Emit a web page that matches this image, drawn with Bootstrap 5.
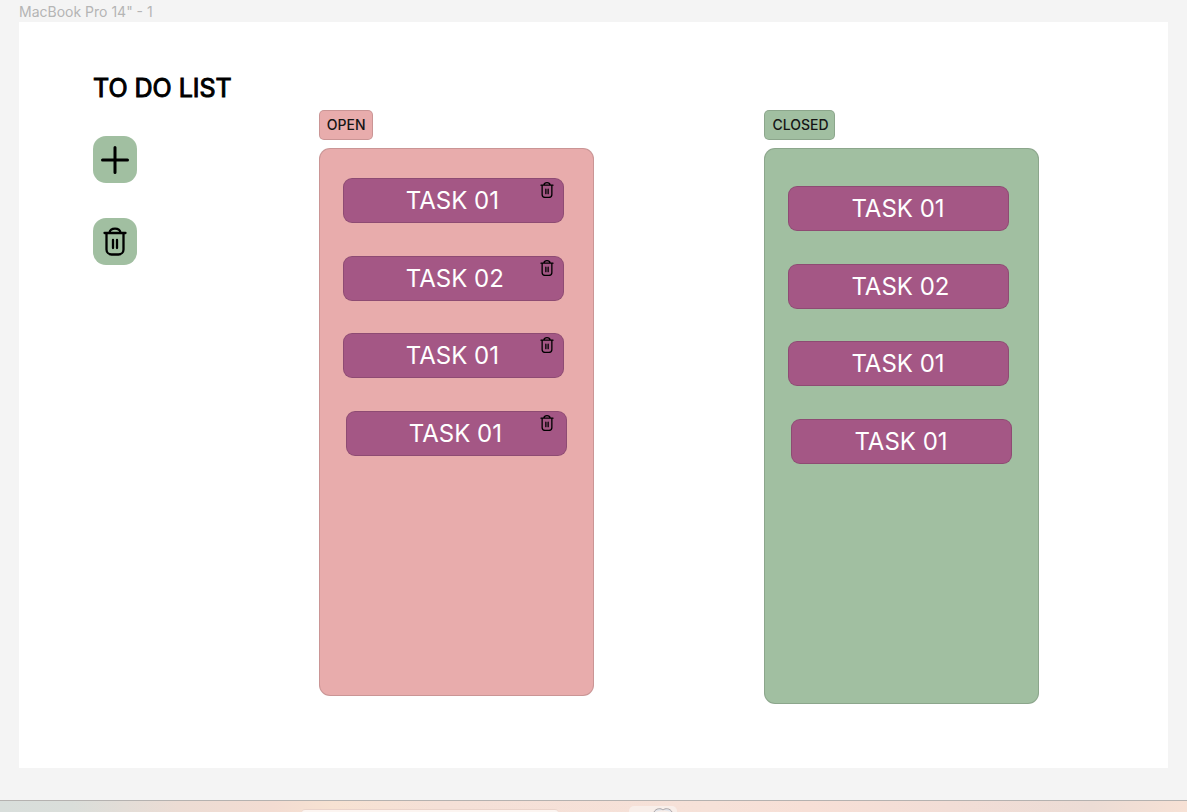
<!DOCTYPE html>
<html lang="en">
<head>
<meta charset="utf-8">
<meta name="viewport" content="width=device-width, initial-scale=1">
<title>To do list</title>
<link href="https://cdn.jsdelivr.net/npm/bootstrap@5.3.0/dist/css/bootstrap.min.css" rel="stylesheet">
<style>
  :root { --pink: #e8acac; --green: #a1bfa1; --plum: #a45785; --edge: rgba(0, 0, 0, .13); }
  body { font-family: Inter, "Liberation Sans", sans-serif; background: #f4f4f4; color: #000; }
  .frame-name { font-size: 14px; line-height: 24px; height: 22px; padding-left: 19px; color: #b5b5b5; }
  .artboard { margin: 0 19px 32px; padding: 0 0 64px 74px; background: #fff; }
  .board-grid { display: grid; grid-template-columns: 226fr 275fr 171fr 275fr 129fr; align-items: start; }
  .lane-open { grid-column: 2; }
  .lane-closed { grid-column: 4; }
  .side { padding-top: 48px; }
  .side h1 { font-size: 25px; line-height: 36px; font-weight: 400; -webkit-text-stroke: 1px #000; white-space: nowrap; margin-bottom: 30px; }
  .tool { width: 44px; height: 47px; border: 0; border-radius: 13px; background: var(--green); color: #000; }
  .tools { gap: 35px; }
  .lane { padding-top: 88px; }
  .tag { font-size: 14px; line-height: 28px; font-weight: 500; color: #151515; padding: 0 6px 0 7px; border: 1px solid var(--edge); border-radius: 5px; margin-bottom: 8px; }
  .panel { border: 1px solid var(--edge); border-radius: 11px; padding: 29px 29px 0 23px; min-height: 548px; }
  .lane-open .tag, .lane-open .panel { background-color: var(--pink); }
  .lane-closed .tag, .lane-closed .panel { background-color: var(--green); }
  .lane-closed .panel { padding-top: 37px; min-height: 556px; }
  .tasks { height: 278px; }
  .task { height: 45px; padding-left: 62px; border: 1px solid var(--edge); border-radius: 9px; background-color: var(--plum); color: #fff; font-size: 24px; line-height: 43px; font-weight: 400; }
  .tasks li:last-child .task { margin: 0 -3px 0 3px; }
  .remove { top: 4px; right: 10px; width: 14px; height: 16px; color: #000; }
  .dock { height: 12px; border-top: 1px solid #b5b2b0;
    background: linear-gradient(90deg, #d8dedb 0, #dadeda 6%, #ecdcd4 15%, #f3dcd2 23%, #f7e2d2 28%, #f5e0d7 37%, #f6e1d8 60%, #f7dfd6 68%, #f2ddd6 80%, #ecdcd5 92%, #f7e1d5 100%); }
  .dock-bar { width: 256px; height: 3px; margin-left: 302px; background: #fcf5f1; border-top: 1px solid #ead3ca; border-radius: 10px 10px 0 0; }
  .dock-tile { width: 48px; height: 6px; margin-left: 71px; background: #f8eee9; border-radius: 5px 5px 0 0; }
</style>
</head>
<body class="d-flex flex-column min-vh-100">
<svg class="d-none" aria-hidden="true">
  <symbol id="bin" viewBox="0 0 24 28" fill="none" stroke="currentColor" stroke-width="2.300" stroke-linecap="round" stroke-linejoin="round">
    <path d="M1.500 5.500h21M3.500 5.500v16.500a5 5 0 0 0 5 5h7a5 5 0 0 0 5-5V5.500M6.500 5C7 2.500 9 1.200 12 1.200s5 1.300 5.500 3.800M10 12.500v8M14 12.500v8"/>
  </symbol>
</svg>

<div class="frame-name">MacBook Pro 14" - 1</div>

<main class="artboard flex-grow-1">
  <div class="board-grid">
    <div class="side">
      <h1>TO DO LIST</h1>
      <div class="tools d-flex flex-column">
        <button type="button" class="tool d-flex align-items-center justify-content-center p-0" aria-label="Add task">
          <svg width="28" height="28" viewBox="0 0 28 28" fill="none" stroke="currentColor" stroke-width="3" stroke-linecap="round"><path d="M14 1.500v25M1.500 14h25"/></svg>
        </button>
        <button type="button" class="tool d-flex align-items-center justify-content-center p-0" aria-label="Delete tasks">
          <svg width="24" height="29"><use href="#bin"/></svg>
        </button>
      </div>
    </div>

    <section class="lane lane-open d-flex flex-column">
      <h2 class="tag align-self-start">OPEN</h2>
      <div class="panel">
        <ul class="tasks list-unstyled d-flex flex-column justify-content-between mb-0">
          <li class="position-relative"><div class="task">TASK 01</div><button type="button" class="remove btn p-0 border-0 position-absolute d-flex" aria-label="Delete task"><svg width="14" height="16"><use href="#bin"/></svg></button></li>
          <li class="position-relative"><div class="task">TASK 02</div><button type="button" class="remove btn p-0 border-0 position-absolute d-flex" aria-label="Delete task"><svg width="14" height="16"><use href="#bin"/></svg></button></li>
          <li class="position-relative"><div class="task">TASK 01</div><button type="button" class="remove btn p-0 border-0 position-absolute d-flex" aria-label="Delete task"><svg width="14" height="16"><use href="#bin"/></svg></button></li>
          <li class="position-relative"><div class="task">TASK 01</div><button type="button" class="remove btn p-0 border-0 position-absolute d-flex" aria-label="Delete task"><svg width="14" height="16"><use href="#bin"/></svg></button></li>
        </ul>
      </div>
    </section>

    <section class="lane lane-closed d-flex flex-column">
      <h2 class="tag align-self-start">CLOSED</h2>
      <div class="panel">
        <ul class="tasks list-unstyled d-flex flex-column justify-content-between mb-0">
          <li><div class="task">TASK 01</div></li>
          <li><div class="task">TASK 02</div></li>
          <li><div class="task">TASK 01</div></li>
          <li><div class="task">TASK 01</div></li>
        </ul>
      </div>
    </section>
  </div>
</main>

<footer class="dock d-flex align-items-end overflow-hidden">
  <div class="dock-bar"></div>
  <div class="dock-tile d-flex align-items-end justify-content-end pe-1">
    <svg width="20" height="4" viewBox="0 0 20 4" fill="#e4e5ea" stroke="#aaa5a8" stroke-width="1"><path d="M1 4C3 0 8 0 10 2M10 2c2-2 7-2 9 2"/></svg>
  </div>
</footer>
<script src="https://cdn.jsdelivr.net/npm/bootstrap@5.3.0/dist/js/bootstrap.bundle.min.js"></script>
</body>
</html>
